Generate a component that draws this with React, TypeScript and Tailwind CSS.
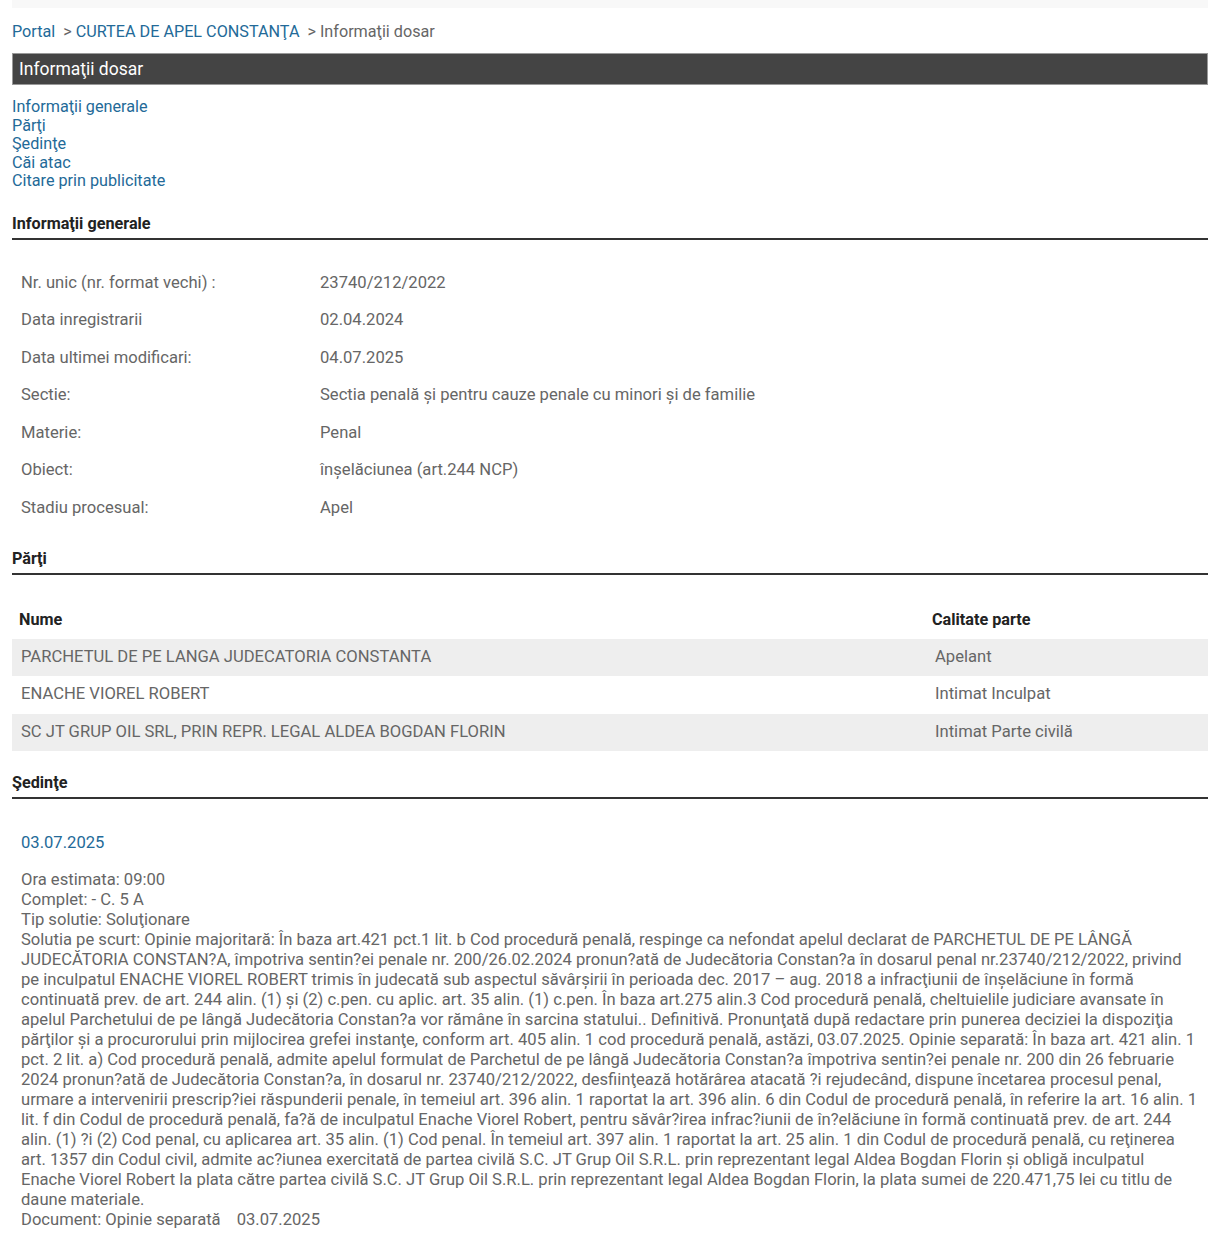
import React from 'react';

const generalInfo: [string, string][] = [
  ['Nr. unic (nr. format vechi) :', '23740/212/2022'],
  ['Data inregistrarii', '02.04.2024'],
  ['Data ultimei modificari:', '04.07.2025'],
  ['Sectie:', 'Sectia penală și pentru cauze penale cu minori și de familie'],
  ['Materie:', 'Penal'],
  ['Obiect:', 'înșelăciunea (art.244 NCP)'],
  ['Stadiu procesual:', 'Apel'],
];

const parties: [string, string][] = [
  ['PARCHETUL DE PE LANGA JUDECATORIA CONSTANTA', 'Apelant'],
  ['ENACHE VIOREL ROBERT', 'Intimat Inculpat'],
  ['SC JT GRUP OIL SRL, PRIN REPR. LEGAL ALDEA BOGDAN FLORIN', 'Intimat Parte civilă'],
];

const navLinks = ['Informaţii generale', 'Părţi', 'Şedinţe', 'Căi atac', 'Citare prin publicitate'];

const solution =
  'Solutia pe scurt: Opinie majoritară: În baza art.421 pct.1 lit. b Cod procedură penală, respinge ca nefondat apelul declarat de PARCHETUL DE PE LÂNGĂ JUDECĂTORIA CONSTAN?A, împotriva sentin?ei penale nr. 200/26.02.2024 pronun?ată de Judecătoria Constan?a în dosarul penal nr.23740/212/2022, privind pe inculpatul ENACHE VIOREL ROBERT trimis în judecată sub aspectul săvârșirii în perioada dec. 2017 – aug. 2018 a infracţiunii de înșelăciune în formă continuată prev. de art. 244 alin. (1) și (2) c.pen. cu aplic. art. 35 alin. (1) c.pen. În baza art.275 alin.3 Cod procedură penală, cheltuielile judiciare avansate în apelul Parchetului de pe lângă Judecătoria Constan?a vor rămâne în sarcina statului.. Definitivă. Pronunţată după redactare prin punerea deciziei la dispoziţia părţilor și a procurorului prin mijlocirea grefei instanţe, conform art. 405 alin. 1 cod procedură penală, astăzi, 03.07.2025. Opinie separată: În baza art. 421 alin. 1 pct. 2 lit. a) Cod procedură penală, admite apelul formulat de Parchetul de pe lângă Judecătoria Constan?a împotriva sentin?ei penale nr. 200 din 26 februarie 2024 pronun?ată de Judecătoria Constan?a, în dosarul nr. 23740/212/2022, desfiinţează hotărârea atacată ?i rejudecând, dispune încetarea procesul penal, urmare a intervenirii prescrip?iei răspunderii penale, în temeiul art. 396 alin. 1 raportat la art. 396 alin. 6 din Codul de procedură penală, în referire la art. 16 alin. 1 lit. f din Codul de procedură penală, fa?ă de inculpatul Enache Viorel Robert, pentru săvâr?irea infrac?iunii de în?elăciune în formă continuată prev. de art. 244 alin. (1) ?i (2) Cod penal, cu aplicarea art. 35 alin. (1) Cod penal. În temeiul art. 397 alin. 1 raportat la art. 25 alin. 1 din Codul de procedură penală, cu reţinerea art. 1357 din Codul civil, admite ac?iunea exercitată de partea civilă S.C. JT Grup Oil S.R.L. prin reprezentant legal Aldea Bogdan Florin și obligă inculpatul Enache Viorel Robert la plata către partea civilă S.C. JT Grup Oil S.R.L. prin reprezentant legal Aldea Bogdan Florin, la plata sumei de 220.471,75 lei cu titlu de daune materiale.';

function SectionTitle({ children }: { children: React.ReactNode }) {
  return (
    <h3 className="border-b-2 border-[#333] pb-[5px] text-[16.2px] leading-[18px] font-bold text-[#222]">
      {children}
    </h3>
  );
}

export default function App() {
  return (
    <div className="min-h-[1252px] bg-white px-3 font-['Roboto',sans-serif] text-[16.6px] text-[#666]">
      <div className="h-2 bg-[#f8f8f8]" />

      {/* breadcrumb */}
      <div className="mt-[15px] text-[16.2px] leading-[18px]">
        <a className="text-[#236a98]">Portal</a>
        <span className="ml-2">&gt; </span>
        <a className="text-[#236a98]">CURTEA DE APEL CONSTANŢA</a>
        <span className="ml-2">&gt; Informaţii dosar</span>
      </div>

      <div className="mt-[12px] flex h-[32px] items-center border border-[#999] bg-[#444] px-[6px] text-[17.5px] text-white">
        Informaţii dosar
      </div>

      <nav className="mt-[13px] flex flex-col text-[16.2px] leading-[18.5px] text-[#236a98]">
        {navLinks.map((l) => (
          <a key={l}>{l}</a>
        ))}
      </nav>

      <section className="mt-[24px]">
        <SectionTitle>Informaţii generale</SectionTitle>
        <div className="mt-[25px]">
          {generalInfo.map(([label, value]) => (
            <div key={label} className="flex h-[37.5px] items-center">
              <div className="w-[299px] pl-[9px]">{label}</div>
              <div className="pl-[9px]">{value}</div>
            </div>
          ))}
        </div>
      </section>

      <section className="mt-[23px]">
        <SectionTitle>Părţi</SectionTitle>
        <div className="mt-[26px]">
          <div className="flex h-[37.5px] items-center text-[16.2px] font-bold text-[#222]">
            <div className="w-[914px] pl-[7px]">Nume</div>
            <div className="pl-[6px]">Calitate parte</div>
          </div>
          {parties.map(([name, role], i) => (
            <div
              key={name}
              className={`flex h-[37.5px] items-center ${i % 2 === 0 ? 'bg-[#eee]' : ''}`}
            >
              <div className="w-[914px] pl-[9px]">{name}</div>
              <div className="pl-[9px]">{role}</div>
            </div>
          ))}
        </div>
      </section>

      <section className="mt-[23px]">
        <SectionTitle>Şedinţe</SectionTitle>
        <div className="pl-[9px] pr-2">
          <div className="mt-[35px] leading-[18px] text-[#236a98]">03.07.2025</div>
          <div className="mt-[18px] leading-[20px]">
            <p>Ora estimata: 09:00</p>
            <p>Complet: - C. 5 A</p>
            <p>Tip solutie: Soluţionare</p>
            <p>{solution}</p>
            <p>
              Document: Opinie separată
              <span className="ml-4">03.07.2025</span>
            </p>
          </div>
        </div>
      </section>
    </div>
  );
}
